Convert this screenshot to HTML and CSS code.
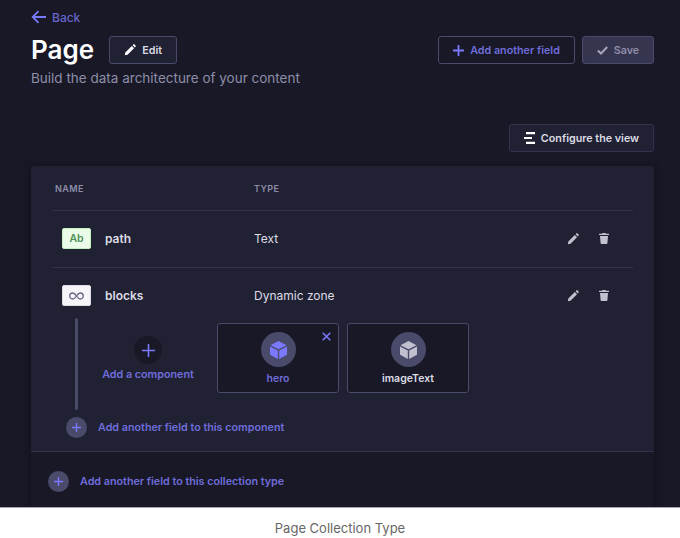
FILE: index.html
```html
<!DOCTYPE html>
<html>
<head>
  <meta charset="UTF-8">
  <title>Page Collection Type</title>
  <link rel="stylesheet" href="styles.css">
</head>
<body>
  <div class="shot">
    <a class="back">
      <svg width="16" height="14" viewBox="0 0 16 14"><path d="M15 7H2M7.500 1.200 1.700 7l5.800 5.800" fill="none" stroke="#7b79ff" stroke-width="1.800"/></svg>
      <span>Back</span>
    </a>

    <div class="head">
      <div class="head_left">
        <h1>Page</h1>
        <button class="btn btn_edit">
          <svg width="12" height="12" viewBox="0 0 12 12"><path d="M0.800 11.200 1.300 8.500 7.800 2l2.200 2.200-6.500 6.500zM8.600 1.200 9.500.3a.6.6 0 0 1 .8 0l1.400 1.400a.6.6 0 0 1 0 .8l-.9.9z" fill="#fff"/></svg>
          Edit
        </button>
      </div>
      <div class="head_right">
        <button class="btn btn_add">
          <svg width="11" height="11" viewBox="0 0 11 11"><path d="M5.500 0v11M0 5.500h11" stroke="#7b79ff" stroke-width="1.800"/></svg>
          Add another field
        </button>
        <button class="btn btn_save">
          <svg width="11" height="9" viewBox="0 0 11 9"><path d="M.8 4.500 4 7.500 10.200 1" fill="none" stroke="#a5a5ba" stroke-width="2"/></svg>
          Save
        </button>
      </div>
    </div>
    <p class="sub">Build the data architecture of your content</p>

    <div class="toolbar">
      <button class="btn btn_config">
        <svg width="11" height="12" viewBox="0 0 11 12"><path d="M2 0h9v2.200H2zM0 4.900h8v2.200H0zM2 9.800h9V12H2z" fill="#fff"/></svg>
        Configure the view
      </button>
    </div>

    <div class="card">
      <div class="table">
        <div class="row row_head">
          <div class="c_name">NAME</div>
          <div class="c_type">TYPE</div>
        </div>

        <div class="row row_field">
          <div class="c_name">
            <span class="badge badge_text">Ab</span>
            <b>path</b>
          </div>
          <div class="c_type">Text</div>
          <div class="c_actions">
            <svg width="12" height="12" viewBox="0 0 12 12"><path d="M0.800 11.200 1.300 8.500 7.800 2l2.200 2.200-6.500 6.500zM8.600 1.200 9.500.3a.6.6 0 0 1 .8 0l1.400 1.400a.6.6 0 0 1 0 .8l-.9.9z" fill="#c0c0cf"/></svg>
            <svg width="10" height="11" viewBox="0 0 10 11"><path d="M3.500 0h3l.5.800h3v1.200H0V.8h3zM1 3h8l-.6 7.300a.8.8 0 0 1-.8.700H2.400a.8.8 0 0 1-.8-.7z" fill="#c0c0cf"/></svg>
          </div>
        </div>

        <div class="row row_field row_last">
          <div class="c_name">
            <span class="badge badge_dz">
              <svg width="15" height="8" viewBox="0 0 15 8"><path d="M7.500 4C6.300 2.200 5.300 1 3.700 1a3 3 0 0 0 0 6c1.600 0 2.600-1.200 3.800-3s2.200-3 3.800-3a3 3 0 0 1 0 6c-1.600 0-2.600-1.200-3.800-3z" fill="none" stroke="#666687" stroke-width="1.300"/></svg>
            </span>
            <b>blocks</b>
          </div>
          <div class="c_type">Dynamic zone</div>
          <div class="c_actions">
            <svg width="12" height="12" viewBox="0 0 12 12"><path d="M0.800 11.200 1.300 8.500 7.800 2l2.200 2.200-6.500 6.500zM8.600 1.200 9.500.3a.6.6 0 0 1 .8 0l1.400 1.400a.6.6 0 0 1 0 .8l-.9.9z" fill="#c0c0cf"/></svg>
            <svg width="10" height="11" viewBox="0 0 10 11"><path d="M3.500 0h3l.5.800h3v1.200H0V.8h3zM1 3h8l-.6 7.300a.8.8 0 0 1-.8.700H2.400a.8.8 0 0 1-.8-.7z" fill="#c0c0cf"/></svg>
          </div>
        </div>

        <div class="zone">
          <div class="zone_bar"></div>
          <div class="zone_add">
            <span class="zone_circle">
              <svg width="13" height="13" viewBox="0 0 13 13"><path d="M6.500 0v13M0 6.500h13" stroke="#7b79ff" stroke-width="1.600"/></svg>
            </span>
            <span>Add a component</span>
          </div>
          <div class="comp comp_on">
            <svg class="comp_x" width="9" height="9" viewBox="0 0 9 9"><path d="M.7.7l7.600 7.600M8.300.7.700 8.300" stroke="#7b79ff" stroke-width="1.500"/></svg>
            <span class="comp_icon">
              <svg width="17" height="18" viewBox="0 0 17 18"><path d="M8.500 0 16.500 4.300 8.500 8.300.5 4.300zM0 5.500l7.800 4V18L.6 14a1 1 0 0 1-.6-1zM17 5.500l-7.800 4V18l7.200-4a1 1 0 0 0 .6-1z" fill="#7b79ff"/></svg>
            </span>
            <span>hero</span>
          </div>
          <div class="comp">
            <span class="comp_icon">
              <svg width="17" height="18" viewBox="0 0 17 18"><path d="M8.500 0 16.500 4.300 8.500 8.300.5 4.300zM0 5.500l7.800 4V18L.6 14a1 1 0 0 1-.6-1zM17 5.500l-7.800 4V18l7.200-4a1 1 0 0 0 .6-1z" fill="#c0c0cf"/></svg>
            </span>
            <span>imageText</span>
          </div>
        </div>

        <div class="add_row add_inner">
          <span class="add_circle">
            <svg width="9" height="9" viewBox="0 0 9 9"><path d="M4.500 0v9M0 4.500h9" stroke="#7b79ff" stroke-width="1.400"/></svg>
          </span>
          Add another field to this component
        </div>
      </div>

      <div class="add_row add_footer">
        <span class="add_circle">
          <svg width="9" height="9" viewBox="0 0 9 9"><path d="M4.500 0v9M0 4.500h9" stroke="#7b79ff" stroke-width="1.400"/></svg>
        </span>
        Add another field to this collection type
      </div>
    </div>
  </div>
  <div class="caption">Page Collection Type</div>
</body>
</html>
```

FILE: styles.css
```css
* {
	box-sizing: border-box;
}

body {
	margin: 0;
	background: #fff;
	font-family: Inter, "Liberation Sans", sans-serif;
}

.shot {
	height: 508px;
	padding: 0 26px 0 31px;
	overflow: hidden;
	background: #181826;
	border-bottom: 1px solid #a5a5ba;
}

/*back link*/
.back {
	display: flex;
	align-items: center;
	gap: 5px;
	height: 18px;
	margin-top: 8px;
	color: #6866cc;
	font-size: 12px;
	font-weight: 500;
}

/*header*/
.head {
	display: flex;
	justify-content: space-between;
	align-items: center;
	height: 28px;
	margin-top: 10px;
}

.head_left,
.head_right {
	display: flex;
	align-items: center;
}

.head_right {
	gap: 7px;
}

h1 {
	margin: 0 15px 0 0;
	color: #fff;
	font-size: 26px;
	font-weight: 600;
	line-height: 28px;
}

.sub {
	margin: 5px 0 0;
	color: #8e8ea9;
	font-size: 13.500px;
	line-height: 18px;
}

.btn {
	display: flex;
	align-items: center;
	justify-content: center;
	height: 28px;
	gap: 6px;
	padding: 0;
	border: 1px solid #4a4a6a;
	border-radius: 3px;
	background: #212134;
	color: #d8d8e3;
	font-family: inherit;
	font-size: 10.750px;
	font-weight: 600;
}

.btn_edit {
	width: 68px;
}

.btn_add {
	width: 137px;
	background: #181826;
	color: #6f6ddb;
}

.btn_save {
	width: 72px;
	border-color: #4a4a6a;
	background: #35354f;
	color: #8e8ea9;
}

.toolbar {
	display: flex;
	justify-content: flex-end;
	margin-top: 37px;
}

.btn_config {
	width: 145px;
	border-color: #32324d;
	color: #dcdce4;
}

/*table card*/
.card {
	margin-top: 14px;
	border-radius: 3px;
	background: #212134;
	box-shadow: 0 1px 6px rgba(10, 10, 20, 0.5);
}

.table {
	padding: 0 21px 0 21px;
}

.row {
	display: flex;
	align-items: center;
	border-bottom: 1px solid #32324d;
}

.row_head {
	height: 45px;
	padding-left: 3px;
	color: #8e8ea9;
	font-size: 9px;
	font-weight: 600;
	letter-spacing: 0.4px;
}

.row_head .c_name {
	padding-left: 0;
	width: 199px;
}

.row_field {
	height: 57px;
	padding-bottom: 1px;
	color: #dcdce4;
	font-size: 12px;
}

.row_last {
	height: 55px;
	padding-bottom: 0;
	border-bottom: 0;
}

.c_name {
	display: flex;
	align-items: center;
	width: 202px;
	padding-left: 10px;
}

.c_name b {
	margin-left: 14px;
	font-weight: 600;
}

.c_type {
	flex: 1;
}

.c_actions {
	display: flex;
	align-items: center;
	gap: 20px;
	padding-right: 24px;
}

.badge {
	display: flex;
	align-items: center;
	justify-content: center;
	width: 29px;
	height: 21px;
	border-radius: 2px;
	font-size: 10.500px;
	font-weight: 600;
}

.badge_text {
	background: #eafbe7;
	border: 1px solid #c6f0c2;
	color: #4d8f56;
}

.badge_dz {
	background: #f6f6f9;
	border: 1px solid #dcdce4;
}

/*dynamic zone*/
.zone {
	display: flex;
	align-items: flex-start;
	height: 93px;
	padding-left: 23px;
	margin-top: -11px;
}

.zone_bar {
	width: 3px;
	height: 92px;
	margin-top: 6px;
	border-radius: 2px;
	background: #4a4a6a;
}

.zone_add {
	display: flex;
	flex-direction: column;
	align-items: center;
	width: 92px;
	margin-left: 24px;
	margin-top: 24px;
	gap: 3px;
	color: #6f6ddb;
	font-size: 10.750px;
	font-weight: 600;
	line-height: 16px;
	white-space: nowrap;
}

.zone_circle {
	display: flex;
	align-items: center;
	justify-content: center;
	width: 28px;
	height: 28px;
	border-radius: 50%;
	background: #181826;
}

.comp {
	position: relative;
	display: flex;
	flex-direction: column;
	align-items: center;
	gap: 5px;
	width: 122px;
	height: 70px;
	margin-top: 11px;
	margin-right: 8px;
	padding-top: 8px;
	border: 1px solid #4a4a6a;
	border-radius: 3px;
	background: #181826;
	color: #dcdce4;
	font-size: 10.500px;
	font-weight: 600;
	line-height: 14px;
}

.comp_on {
	margin-left: 23px;
	color: #6f6ddb;
}

.comp_x {
	position: absolute;
	top: 8px;
	right: 7px;
}

.comp_icon {
	display: flex;
	align-items: center;
	justify-content: center;
	width: 35px;
	height: 35px;
	border-radius: 50%;
	background: #4a4a6a;
}

/*add rows*/
.add_row {
	display: flex;
	align-items: center;
	gap: 11px;
	color: #6f6ddb;
	font-size: 10.750px;
	font-weight: 600;
}

.add_inner {
	height: 40px;
	padding-left: 14px;
	margin-top: 2px;
	margin-bottom: 4px;
}

.add_footer {
	height: 60px;
	padding-left: 17px;
	padding-bottom: 1px;
	border-top: 1px solid #32324d;
	background: #181826;
}

.add_circle {
	display: flex;
	align-items: center;
	justify-content: center;
	width: 21px;
	height: 21px;
	border-radius: 50%;
	background: #4a4a6a;
}

/*caption under the picture*/
.caption {
	height: 30px;
	color: #666;
	font-size: 13px;
	line-height: 41px;
	text-align: center;
}
```
